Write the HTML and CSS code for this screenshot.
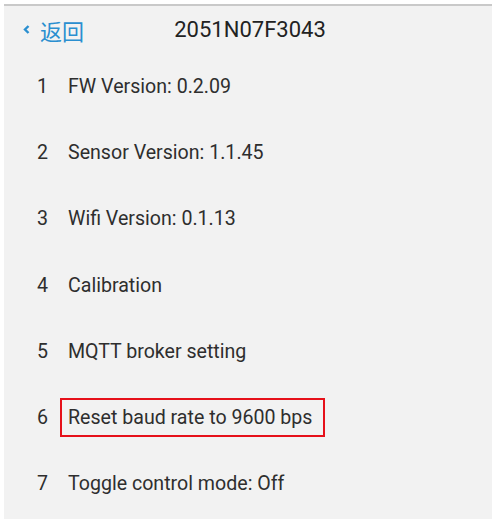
FILE: index.html
```html
<!DOCTYPE html>
<html lang="en">
<head>
<meta charset="utf-8">
<link rel="stylesheet" href="styles.css">
</head>
<body>
<div class="screen">
  <header class="bar">
    <a class="back">
      <svg class="chev" width="7" height="9" viewBox="0 0 7 9"><polyline points="5.5,1 2,4.5 5.5,8" fill="none" stroke="#2a8fd0" stroke-width="2.4"/></svg>
      <span class="back-label">返回</span>
    </a>
    <h1 class="title">2051N07F3043</h1>
    <span></span>
  </header>
  <ul class="menu">
    <li class="row"><span class="num">1</span><span class="item">FW Version: 0.2.09</span></li>
    <li class="row"><span class="num">2</span><span class="item">Sensor Version: 1.1.45</span></li>
    <li class="row"><span class="num">3</span><span class="item">Wifi Version: 0.1.13</span></li>
    <li class="row"><span class="num">4</span><span class="item">Calibration</span></li>
    <li class="row"><span class="num">5</span><span class="item">MQTT broker setting</span></li>
    <li class="row"><span class="num">6</span><span class="item highlight">Reset baud rate to 9600 bps</span></li>
    <li class="row"><span class="num">7</span><span class="item">Toggle control mode: Off</span></li>
  </ul>
</div>
</body>
</html>
```
FILE: styles.css
```css
html, body {
  margin: 0;
  padding: 0;
  background: #ffffff;
  height: 100%;
}
body {
  font-family: Roboto, "Noto Sans CJK SC", sans-serif;
  color: #2e2e2e;
}
.screen {
  margin: 4px 2px 0 4px;
  border-top: 2px solid #c9c9c9;
  background: #f2f2f2;
  height: calc(100% - 4px);
  box-sizing: border-box;
}
.bar {
  height: 47px;
  display: grid;
  grid-template-columns: 1fr auto 1fr;
  align-items: center;
}
.back {
  display: flex;
  align-items: center;
  padding-left: 19px;
  color: #2a8fd0;
  gap: 10px;
}
.back-label {
  font-family: "Noto Sans CJK SC", sans-serif;
  font-size: 22px;
  line-height: 26px;
}
.title {
  margin: 0;
  font-size: 22px;
  font-weight: 400;
  color: #222;
  padding-left: 4px;
}
.menu {
  list-style: none;
  margin: 0;
  padding: 0;
}
.row {
  height: 66.3px;
  display: flex;
  align-items: center;
  font-size: 19.6px;
}
.num {
  width: 23px;
  padding-left: 33px;
  box-sizing: content-box;
}
.item {
  border: 2px solid transparent;
  padding: 0 11px 0 6px;
  line-height: 35px;
}
.highlight {
  border-color: #e6111a;
}
```
